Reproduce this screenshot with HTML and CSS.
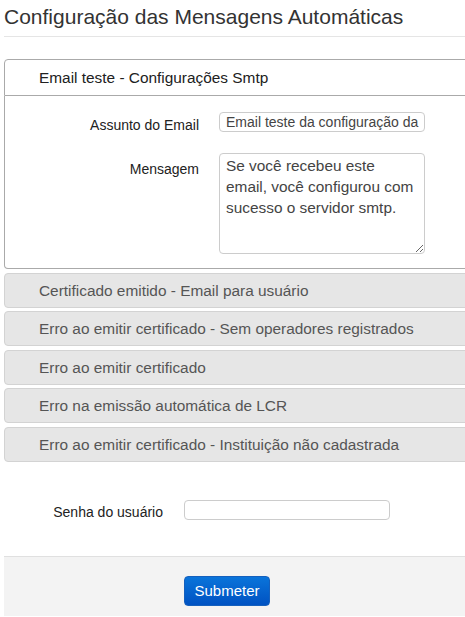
FILE: index.html
```html
<!DOCTYPE html>
<html lang="pt">
<head>
<meta charset="utf-8">
<title>Configuração das Mensagens Automáticas</title>
<link rel="stylesheet" href="styles.css">
</head>
<body>
<div class="page">
  <h1 class="title">Configuração das Mensagens Automáticas</h1>
  <div class="accordion">
    <div class="acc-head active">Email teste - Configurações Smtp</div>
    <div class="acc-panel">
      <div class="form-row">
        <label class="lbl">Assunto do Email</label>
        <input class="field" type="text" value="Email teste da configuração da">
      </div>
      <div class="form-row">
        <label class="lbl lbl-msg">Mensagem</label>
        <textarea class="field area">Se você recebeu este email, você configurou com sucesso o servidor smtp.</textarea>
      </div>
    </div>
    <div class="acc-head">Certificado emitido - Email para usuário</div>
    <div class="acc-head">Erro ao emitir certificado - Sem operadores registrados</div>
    <div class="acc-head">Erro ao emitir certificado</div>
    <div class="acc-head">Erro na emissão automática de LCR</div>
    <div class="acc-head">Erro ao emitir certificado - Instituição não cadastrada</div>
  </div>
  <div class="pass-row">
    <label class="lbl pass-lbl">Senha do usuário</label>
    <input class="field pass" type="password">
  </div>
  <div class="footer">
    <button class="btn" type="button">Submeter</button>
  </div>
</div>
</body>
</html>
```
FILE: styles.css
```css
html, body {
  margin: 0;
  padding: 0;
  overflow: hidden;
  background: #fff;
}
.page {
  width: 490px;
  padding-left: 4px;
  font-family: "Liberation Sans", Arial, sans-serif;
  color: #333;
}
.title {
  margin: 0;
  padding-top: 3px;
  height: 33px;
  font-size: 21px;
  font-weight: normal;
  line-height: 27px;
  color: #333;
  border-bottom: 1px solid #e5e5e5;
}
.accordion {
  margin-top: 22px;
}
.acc-head {
  box-sizing: border-box;
  height: 35px;
  padding-left: 34px;
  line-height: 33px;
  font-size: 15.4px;
  color: #555;
  background: #e6e6e6;
  border: 1px solid #d3d3d3;
  border-radius: 4px;
  margin-top: 3.6px;
}
.acc-head.active {
  margin-top: 0;
  height: 37px;
  line-height: 35px;
  background: #fff;
  color: #212121;
  border-color: #aaa;
  border-radius: 4px 4px 0 0;
}
.acc-panel {
  border: 1px solid #aaa;
  border-top: 0;
  border-radius: 0 0 4px 4px;
  padding: 16px 0 14px;
  height: 142px;
}
.form-row {
  display: flex;
  align-items: flex-start;
  margin-bottom: 20px;
}
.lbl {
  width: 194px;
  text-align: right;
  font-size: 14px;
  color: #222;
  padding-top: 5px;
}
.lbl-msg {
  padding-top: 8px;
}
.field {
  box-sizing: border-box;
  margin-left: 20px;
  width: 206px;
  height: 20px;
  border: 1px solid #ccc;
  border-radius: 4px;
  padding: 0 4px 0 6px;
  font-family: "Liberation Sans", Arial, sans-serif;
  font-size: 14px;
  color: #444;
  background: #fff;
}
.area {
  height: 101px;
  padding: 1px 6px;
  font-size: 15.4px;
  line-height: 21px;
  resize: vertical;
}
.pass-row {
  display: flex;
  align-items: center;
  height: 94px;
}
.pass-lbl {
  width: 159px;
  padding-top: 7px;
}
.pass {
  margin-left: 21px;
  margin-top: 3px;
}
.footer {
  border-top: 1px solid #e0e0e0;
  background: #f3f3f3;
  height: 60px;
  padding-left: 180px;
  padding-top: 19px;
  box-sizing: border-box;
}
.btn {
  width: 86px;
  height: 30px;
  border: 1px solid #1560bd;
  border-radius: 4px;
  background: linear-gradient(#0a74da, #0052c2);
  color: #fff;
  font-family: "Liberation Sans", Arial, sans-serif;
  font-size: 15px;
  padding: 0;
}
```
